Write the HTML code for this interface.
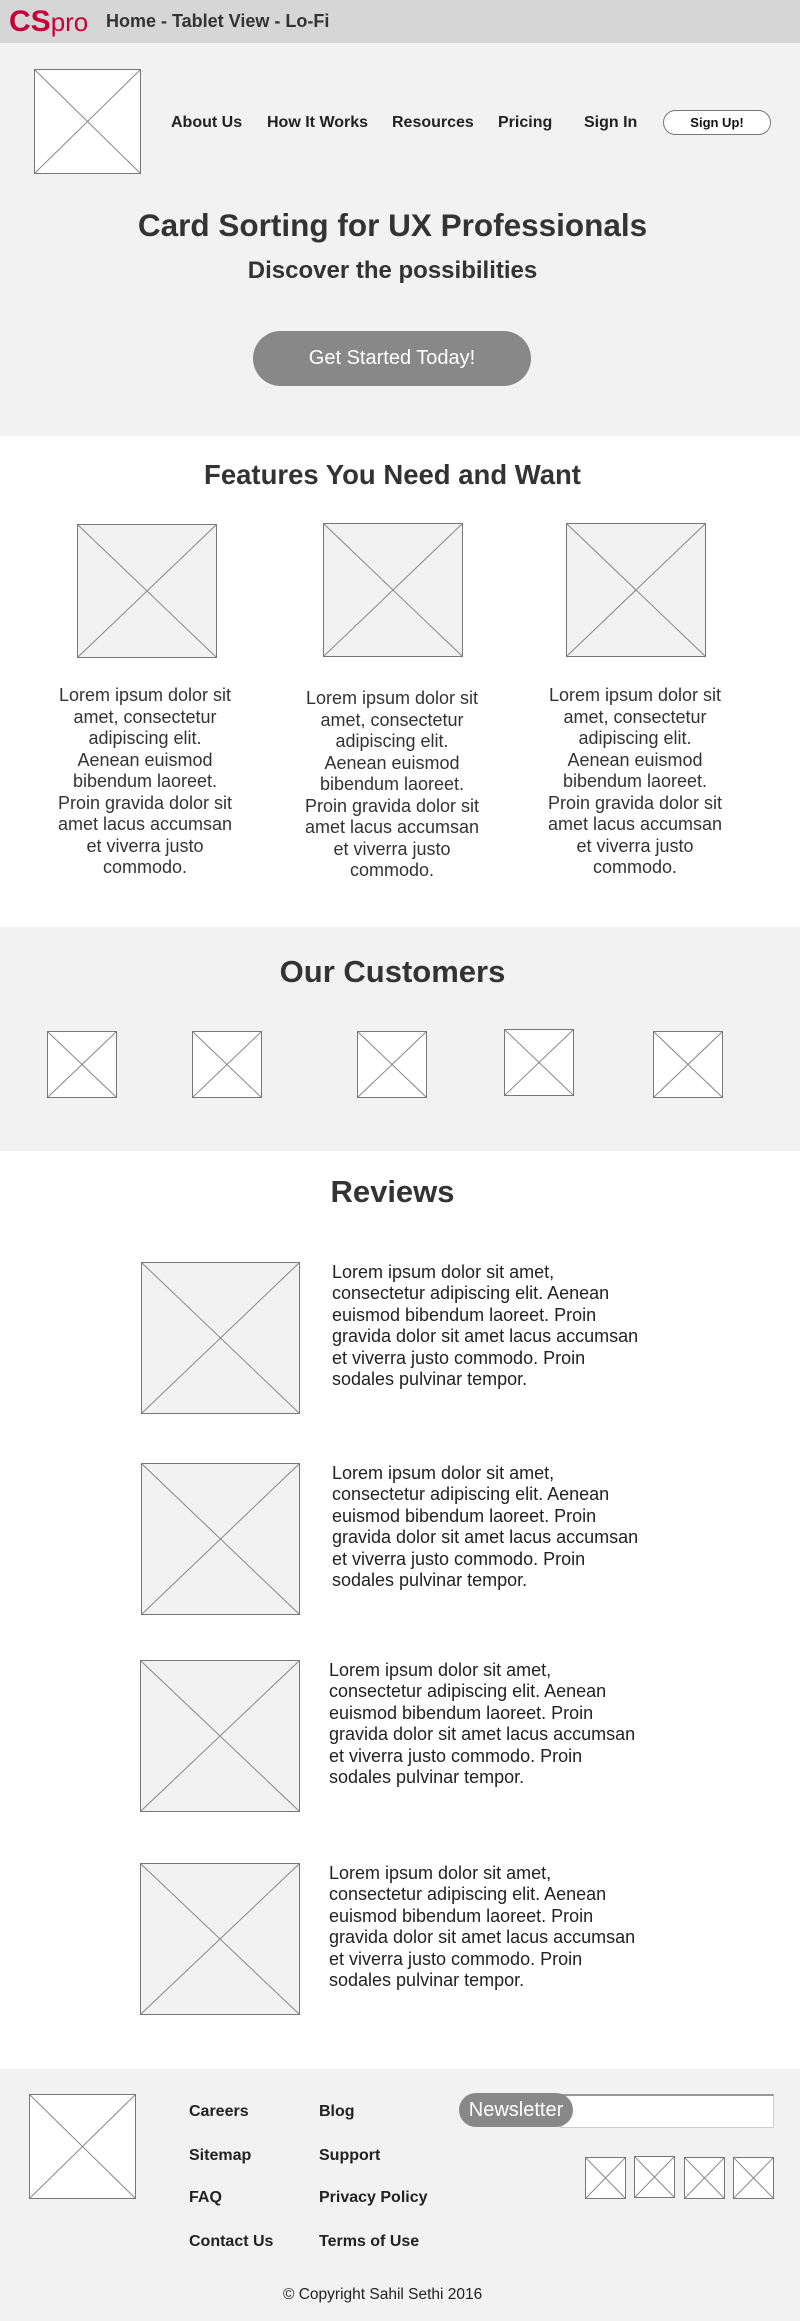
<!DOCTYPE html>
<html><head><meta charset="utf-8"><style>
*{margin:0;padding:0;box-sizing:border-box}
body{width:800px;height:2321px;position:relative;font-family:"Liberation Sans",Arial,sans-serif;color:#333;background:#fff;overflow:hidden}
.a{position:absolute}
.ph{position:absolute;border:1px solid #777;background:#fff}
.ph.g{background:#f2f2f2}
.ph svg{position:absolute;left:0;top:0;width:100%;height:100%}
.ph line{stroke:#888;stroke-width:1}
.nav{position:absolute;top:112px;font-size:16px;font-weight:bold;color:#222;line-height:22px}
.ft{font-size:18px;line-height:21.5px;text-align:center;width:176px;color:#333}
.rv{font-size:18px;line-height:21.4px;width:320px;color:#222}
.fl{position:absolute;font-size:16px;font-weight:bold;color:#222;line-height:20px}
</style></head><body>
<div class="a" style="left:0;top:0;width:800px;height:43px;background:#d6d6d6"></div>
<div class="a" style="left:9px;top:4px;line-height:36px;white-space:nowrap"><span style="color:#c8003a;font-weight:bold;font-size:30px">CS</span><span style="color:#c8003a;font-size:26px">pro</span></div>
<div class="a" style="left:106px;top:10px;font-size:18px;font-weight:bold;color:#333;line-height:22px">Home - Tablet View - Lo-Fi</div>

<div class="a" style="left:0;top:43px;width:800px;height:393px;background:#f2f2f2"></div>
<div class="ph" style="left:34px;top:69px;width:107px;height:105px"><svg viewBox="0 0 100 100" preserveAspectRatio="none"><line x1="0" y1="0" x2="100" y2="100" vector-effect="non-scaling-stroke"/><line x1="100" y1="0" x2="0" y2="100" vector-effect="non-scaling-stroke"/></svg></div>
<div class="nav" style="left:171px">About Us</div>
<div class="nav" style="left:267px">How It Works</div>
<div class="nav" style="left:392px">Resources</div>
<div class="nav" style="left:498px">Pricing</div>
<div class="nav" style="left:584px">Sign In</div>
<div class="a" style="left:663px;top:110px;width:108px;height:25px;border:1px solid #777;border-radius:13px;background:#fff;font-size:13px;font-weight:bold;text-align:center;line-height:23px;color:#111">Sign Up!</div>
<div class="a" style="left:0;top:205px;width:785px;text-align:center;font-size:31.5px;font-weight:bold;line-height:40px;color:#333">Card Sorting for UX Professionals</div>
<div class="a" style="left:0;top:257px;width:785px;text-align:center;font-size:24px;font-weight:bold;line-height:28px;color:#333">Discover the possibilities</div>
<div class="a" style="left:253px;top:331px;width:278px;height:55px;border-radius:28px;background:#888;color:#fff;font-size:20px;text-align:center;line-height:55px">Get Started Today!</div>

<div class="a" style="left:0;top:459px;width:785px;text-align:center;font-size:27.5px;font-weight:bold;line-height:32px">Features You Need and Want</div>
<div class="ph g" style="left:77px;top:524px;width:140px;height:134px"><svg viewBox="0 0 100 100" preserveAspectRatio="none"><line x1="0" y1="0" x2="100" y2="100" vector-effect="non-scaling-stroke"/><line x1="100" y1="0" x2="0" y2="100" vector-effect="non-scaling-stroke"/></svg></div>
<div class="ph g" style="left:323px;top:523px;width:140px;height:134px"><svg viewBox="0 0 100 100" preserveAspectRatio="none"><line x1="0" y1="0" x2="100" y2="100" vector-effect="non-scaling-stroke"/><line x1="100" y1="0" x2="0" y2="100" vector-effect="non-scaling-stroke"/></svg></div>
<div class="ph g" style="left:566px;top:523px;width:140px;height:134px"><svg viewBox="0 0 100 100" preserveAspectRatio="none"><line x1="0" y1="0" x2="100" y2="100" vector-effect="non-scaling-stroke"/><line x1="100" y1="0" x2="0" y2="100" vector-effect="non-scaling-stroke"/></svg></div>
<div class="a ft" style="left:57px;top:685px">Lorem ipsum dolor sit amet, consectetur adipiscing elit. Aenean euismod bibendum laoreet. Proin gravida dolor sit amet lacus accumsan et viverra justo commodo.</div>
<div class="a ft" style="left:304px;top:688px">Lorem ipsum dolor sit amet, consectetur adipiscing elit. Aenean euismod bibendum laoreet. Proin gravida dolor sit amet lacus accumsan et viverra justo commodo.</div>
<div class="a ft" style="left:547px;top:685px">Lorem ipsum dolor sit amet, consectetur adipiscing elit. Aenean euismod bibendum laoreet. Proin gravida dolor sit amet lacus accumsan et viverra justo commodo.</div>

<div class="a" style="left:0;top:927px;width:800px;height:224px;background:#f2f2f2"></div>
<div class="a" style="left:0;top:954px;width:785px;text-align:center;font-size:31px;font-weight:bold;line-height:36px">Our Customers</div>
<div class="ph" style="left:47px;top:1031px;width:70px;height:67px"><svg viewBox="0 0 100 100" preserveAspectRatio="none"><line x1="0" y1="0" x2="100" y2="100" vector-effect="non-scaling-stroke"/><line x1="100" y1="0" x2="0" y2="100" vector-effect="non-scaling-stroke"/></svg></div>
<div class="ph" style="left:192px;top:1031px;width:70px;height:67px"><svg viewBox="0 0 100 100" preserveAspectRatio="none"><line x1="0" y1="0" x2="100" y2="100" vector-effect="non-scaling-stroke"/><line x1="100" y1="0" x2="0" y2="100" vector-effect="non-scaling-stroke"/></svg></div>
<div class="ph" style="left:357px;top:1031px;width:70px;height:67px"><svg viewBox="0 0 100 100" preserveAspectRatio="none"><line x1="0" y1="0" x2="100" y2="100" vector-effect="non-scaling-stroke"/><line x1="100" y1="0" x2="0" y2="100" vector-effect="non-scaling-stroke"/></svg></div>
<div class="ph" style="left:504px;top:1029px;width:70px;height:67px"><svg viewBox="0 0 100 100" preserveAspectRatio="none"><line x1="0" y1="0" x2="100" y2="100" vector-effect="non-scaling-stroke"/><line x1="100" y1="0" x2="0" y2="100" vector-effect="non-scaling-stroke"/></svg></div>
<div class="ph" style="left:653px;top:1031px;width:70px;height:67px"><svg viewBox="0 0 100 100" preserveAspectRatio="none"><line x1="0" y1="0" x2="100" y2="100" vector-effect="non-scaling-stroke"/><line x1="100" y1="0" x2="0" y2="100" vector-effect="non-scaling-stroke"/></svg></div>

<div class="a" style="left:0;top:1174px;width:785px;text-align:center;font-size:31px;font-weight:bold;line-height:36px">Reviews</div>
<div class="ph g" style="left:141px;top:1262px;width:159px;height:152px"><svg viewBox="0 0 100 100" preserveAspectRatio="none"><line x1="0" y1="0" x2="100" y2="100" vector-effect="non-scaling-stroke"/><line x1="100" y1="0" x2="0" y2="100" vector-effect="non-scaling-stroke"/></svg></div>
<div class="a rv" style="left:332px;top:1262px">Lorem ipsum dolor sit amet, consectetur adipiscing elit. Aenean euismod bibendum laoreet. Proin gravida dolor sit amet lacus accumsan et viverra justo commodo. Proin sodales pulvinar tempor.</div>
<div class="ph g" style="left:141px;top:1463px;width:159px;height:152px"><svg viewBox="0 0 100 100" preserveAspectRatio="none"><line x1="0" y1="0" x2="100" y2="100" vector-effect="non-scaling-stroke"/><line x1="100" y1="0" x2="0" y2="100" vector-effect="non-scaling-stroke"/></svg></div>
<div class="a rv" style="left:332px;top:1463px">Lorem ipsum dolor sit amet, consectetur adipiscing elit. Aenean euismod bibendum laoreet. Proin gravida dolor sit amet lacus accumsan et viverra justo commodo. Proin sodales pulvinar tempor.</div>
<div class="ph g" style="left:140px;top:1660px;width:160px;height:152px"><svg viewBox="0 0 100 100" preserveAspectRatio="none"><line x1="0" y1="0" x2="100" y2="100" vector-effect="non-scaling-stroke"/><line x1="100" y1="0" x2="0" y2="100" vector-effect="non-scaling-stroke"/></svg></div>
<div class="a rv" style="left:329px;top:1660px">Lorem ipsum dolor sit amet, consectetur adipiscing elit. Aenean euismod bibendum laoreet. Proin gravida dolor sit amet lacus accumsan et viverra justo commodo. Proin sodales pulvinar tempor.</div>
<div class="ph g" style="left:140px;top:1863px;width:160px;height:152px"><svg viewBox="0 0 100 100" preserveAspectRatio="none"><line x1="0" y1="0" x2="100" y2="100" vector-effect="non-scaling-stroke"/><line x1="100" y1="0" x2="0" y2="100" vector-effect="non-scaling-stroke"/></svg></div>
<div class="a rv" style="left:329px;top:1863px">Lorem ipsum dolor sit amet, consectetur adipiscing elit. Aenean euismod bibendum laoreet. Proin gravida dolor sit amet lacus accumsan et viverra justo commodo. Proin sodales pulvinar tempor.</div>

<div class="a" style="left:0;top:2069px;width:800px;height:252px;background:#f2f2f2"></div>
<div class="ph" style="left:29px;top:2094px;width:107px;height:105px"><svg viewBox="0 0 100 100" preserveAspectRatio="none"><line x1="0" y1="0" x2="100" y2="100" vector-effect="non-scaling-stroke"/><line x1="100" y1="0" x2="0" y2="100" vector-effect="non-scaling-stroke"/></svg></div>
<div class="fl" style="left:189px;top:2102px">Careers</div>
<div class="fl" style="left:319px;top:2102px">Blog</div>
<div class="fl" style="left:189px;top:2146px">Sitemap</div>
<div class="fl" style="left:319px;top:2146px">Support</div>
<div class="fl" style="left:189px;top:2188px">FAQ</div>
<div class="fl" style="left:319px;top:2188px">Privacy Policy</div>
<div class="fl" style="left:189px;top:2232px">Contact Us</div>
<div class="fl" style="left:319px;top:2232px">Terms of Use</div>
<div class="a" style="left:560px;top:2094px;width:214px;height:34px;background:#fff;border:1px solid #ccc;border-top:2px solid #999"></div>
<div class="a" style="left:459px;top:2093px;width:114px;height:34px;border-radius:17px;background:#888;color:#fff;font-size:20px;line-height:34px;text-align:center">Newsletter</div>
<div class="ph" style="left:585px;top:2157px;width:41px;height:42px"><svg viewBox="0 0 100 100" preserveAspectRatio="none"><line x1="0" y1="0" x2="100" y2="100" vector-effect="non-scaling-stroke"/><line x1="100" y1="0" x2="0" y2="100" vector-effect="non-scaling-stroke"/></svg></div>
<div class="ph" style="left:634px;top:2156px;width:41px;height:42px"><svg viewBox="0 0 100 100" preserveAspectRatio="none"><line x1="0" y1="0" x2="100" y2="100" vector-effect="non-scaling-stroke"/><line x1="100" y1="0" x2="0" y2="100" vector-effect="non-scaling-stroke"/></svg></div>
<div class="ph" style="left:684px;top:2157px;width:41px;height:42px"><svg viewBox="0 0 100 100" preserveAspectRatio="none"><line x1="0" y1="0" x2="100" y2="100" vector-effect="non-scaling-stroke"/><line x1="100" y1="0" x2="0" y2="100" vector-effect="non-scaling-stroke"/></svg></div>
<div class="ph" style="left:733px;top:2157px;width:41px;height:42px"><svg viewBox="0 0 100 100" preserveAspectRatio="none"><line x1="0" y1="0" x2="100" y2="100" vector-effect="non-scaling-stroke"/><line x1="100" y1="0" x2="0" y2="100" vector-effect="non-scaling-stroke"/></svg></div>
<div class="a" style="left:283px;top:2285px;font-size:15.5px;line-height:20px;color:#222;white-space:nowrap">© Copyright Sahil Sethi 2016</div>
</body></html>
